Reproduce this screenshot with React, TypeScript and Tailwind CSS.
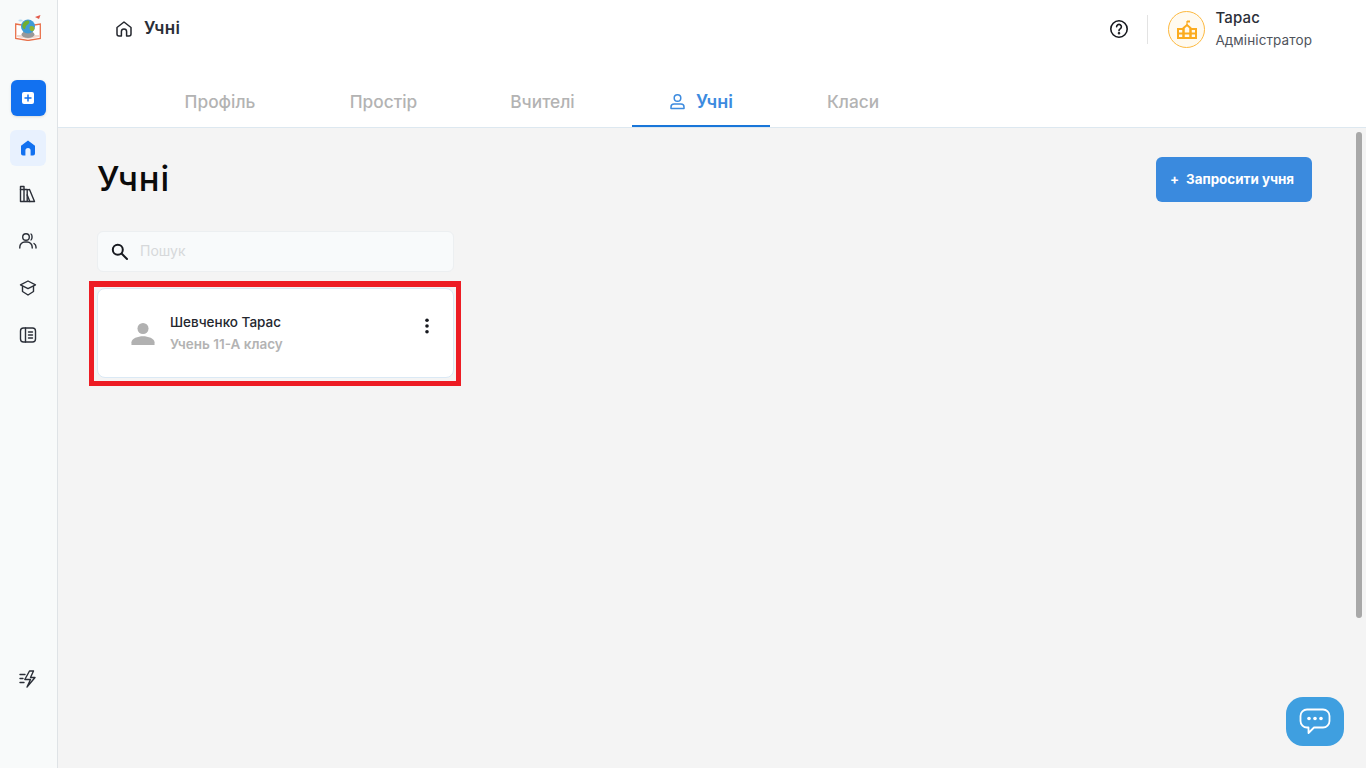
import React from "react";

const font = { fontFamily: "Inter, 'Liberation Sans', sans-serif" };

function Logo() {
  return (
    <svg width="26" height="26" viewBox="0 0 26 26">
      <path d="M0.700 9 L13 11 L25.300 9 L25.300 23.500 L13 25.500 L0.700 23.500 Z" fill="#fff" stroke="#e8704a" strokeWidth="1.300" />
      <path d="M2 22 L13 24 L24 22 L24 20 L2 20 Z" fill="#f1d9cf" />
      <ellipse cx="13" cy="19.500" rx="6.500" ry="3.500" fill="#999" />
      <circle cx="13" cy="11.500" r="7" fill="#3f9bd6" />
      <path d="M8 8.500c2-3 5-3.500 6-2.500s0 3-2 4-1 5-3 4-2-3.500-1-5.500z" fill="#6fae2f" />
      <path d="M15 11.500c2-1 4.500 0 4.500 2s-2 3.500-3.500 2.500-2-3.500-1-4.500z" fill="#8fb52f" />
      <path d="M20 2 L25.500 0 L24 4 Z" fill="#e25a4a" />
      <ellipse cx="5.500" cy="5.500" rx="2.200" ry="1" fill="#bcdcf2" />
    </svg>
  );
}

function NavIcon({ children }: { children: React.ReactNode }) {
  return (
    <svg width="20" height="20" viewBox="0 0 20 20" fill="none" stroke="#2b2f38" strokeWidth="1.400" strokeLinecap="round" strokeLinejoin="round">
      {children}
    </svg>
  );
}

function Sidebar() {
  return (
    <aside className="w-[58px] h-full shrink-0 flex flex-col items-center pr-[1px] bg-[#f8fafa] border-r border-[#dfe3e6]">
      <div className="mt-[14px] h-[28px] flex items-center justify-center">
        <Logo />
      </div>
      <div className="mt-[38px] w-[35px] h-[36px] rounded-[6px] bg-[#1271f0] flex items-center justify-center shadow-sm">
        <div className="w-[12px] h-[12px] rounded-[2px] bg-white flex items-center justify-center">
          <svg width="8" height="8" viewBox="0 0 8 8"><path d="M4 0.500V7.500M0.500 4H7.500" stroke="#1271f0" strokeWidth="1.500" /></svg>
        </div>
      </div>
      <div className="mt-[14px] w-[36px] h-[36px] rounded-[6px] bg-[#e8f1fe] flex items-center justify-center">
        <svg width="18" height="18" viewBox="0 0 18 18">
          <path d="M9 1.500 L16 6.800 V14.500 A2 2 0 0 1 14 16.500 H11.600 V11.500 A2.600 2.600 0 0 0 6.400 11.500 V16.500 H4 A2 2 0 0 1 2 14.500 V6.800 Z" fill="#1271f0" />
        </svg>
      </div>
      <div className="mt-[18px] flex flex-col items-center gap-[27px]">
        <NavIcon>
          <path d="M2.500 2.500h3.500v15H2.500zM6 5.500h3.200v12H6zM9.200 6l2.300-.6 5 12.100H9.200" />
          <path d="M2.500 5.500H6M11.800 17.500l-2.600-6.500" />
        </NavIcon>
        <NavIcon>
          <circle cx="8" cy="6" r="3.300" />
          <path d="M1.800 17v-1a5 5 0 0 1 5-5h2.400a5 5 0 0 1 5 5v1" />
          <path d="M13 3c1.400.8 1.400 5.200 0 6M16 12.500c1.200.8 2 2 2 3.500v1" />
        </NavIcon>
        <NavIcon>
          <path d="M10 3 L17.500 6.800 L10 10.600 L2.500 6.800 Z" />
          <path d="M4.500 8.500V13.500 L10 17 L15.500 13.500 V8.500" />
        </NavIcon>
        <NavIcon>
          <rect x="2.500" y="3" width="15" height="14" rx="3" />
          <path d="M7.500 3v14M10.500 7h4M10.500 10h4M10.500 13h4" />
        </NavIcon>
      </div>
      <div className="mt-auto mb-[79px]">
        <NavIcon>
          <path d="M11.500 2 L6.800 10.500 H12.500 L9 18 L17 8.500 H12.500 L15.500 2 Z" />
          <path d="M2 5.500h5M2 9.500h3M2 13.500h4" />
        </NavIcon>
      </div>
    </aside>
  );
}

function Tab({ label, cls, active }: { label: string; cls: string; active?: boolean }) {
  return (
    <div className={`${cls} h-[47px] pb-[2px] flex items-center justify-center gap-[10px] border-b-2 ${active ? "text-[18px] border-[#1976d9] text-[#3d8bdf] font-semibold" : "text-[17.300px] border-transparent text-[#b3b3b3] font-medium"}`}>
      {active && (
        <svg width="17" height="17" viewBox="0 0 17 17" fill="none" stroke="#3d8bdf" strokeWidth="1.500">
          <circle cx="8.500" cy="5" r="3.300" />
          <path d="M2 15.500v-1.500a3 3 0 0 1 3-3h7a3 3 0 0 1 3 3v1.500z" strokeLinejoin="round" />
        </svg>
      )}
      {label}
    </div>
  );
}

function Header() {
  return (
    <header className="h-[128px] shrink-0 bg-white border-b border-[#dde8f0] flex flex-col">
      <div className="h-[80px] flex pl-[57px] pr-[54px]">
        <div className="h-[57px] flex items-center gap-[11px]">
          <svg width="18" height="18" viewBox="0 0 18 18" fill="none" stroke="#24272e" strokeWidth="1.500" strokeLinejoin="round">
            <path d="M9 2 L16 7.500 V14 A2 2 0 0 1 14 16 H11.600 V11.500 A2.600 2.600 0 0 0 6.400 11.500 V16 H4 A2 2 0 0 1 2 14 V7.500 Z" />
          </svg>
          <span className="text-[17px] font-semibold text-[#2b2f38] tracking-[0.4px]">Учні</span>
        </div>
        <div className="ml-auto h-[58px] flex items-center">
          <svg width="20" height="20" viewBox="0 0 20 20" fill="none" stroke="#17191f" strokeWidth="1.600" strokeLinecap="round">
            <circle cx="10" cy="10" r="8.200" />
            <path d="M7.600 7.800a2.400 2.400 0 1 1 3.600 2.100c-.8.500-1.200.9-1.200 1.800" />
            <circle cx="10" cy="14.300" r="0.500" fill="#17191f" />
          </svg>
          <div className="w-px h-[29px] bg-[#e3e3e3] ml-[18px] mr-[20px]" />
          <div className="w-[37px] h-[37px] rounded-full border border-[#fdb940] bg-[#fffaf0] flex items-center justify-center mr-[10px]">
            <svg width="20" height="19" viewBox="0 0 20 19" fill="none" stroke="#fbab1f" strokeWidth="2">
              <path d="M10 5V1" strokeWidth="1.200" />
              <path d="M10 0.500h3v2h-3z" fill="#fbab1f" stroke="none" />
              <path d="M6.500 8 L10 5 L13.500 8 V18 H6.500 Z" />
              <path d="M1 9h5.500v9H1zM13.500 9H19v9h-5.500zM1 13.500h18" />
            </svg>
          </div>
          <div className="flex flex-col">
            <span className="text-[15px] leading-[20px] font-medium text-[#2b2f38] tracking-[0.2px]">Тарас</span>
            <span className="text-[13.500px] leading-[20px] mt-[2px] text-[#50545c] tracking-[0.1px]">Адміністратор</span>
          </div>
        </div>
      </div>
      <div className="flex pl-[73px]">
        <Tab label="Профіль" cls="w-[178px]" />
        <Tab label="Простір" cls="w-[149px]" />
        <Tab label="Вчителі" cls="w-[169px] mr-[5px]" />
        <Tab label="Учні" cls="w-[138px]" active />
        <Tab label="Класи" cls="w-[166px]" />
      </div>
    </header>
  );
}

function Card() {
  return (
    <div className="relative mt-[16px] w-[357px]">
      <div className="h-[90px] bg-white rounded-[8px] border border-[#dbe9f5] flex pl-[33px] pr-[24px]">
        <svg className="mt-[33px]" width="24" height="24" viewBox="0 0 26 26" fill="#b1b1b1">
          <circle cx="13" cy="7" r="6" />
          <path d="M0.500 25v-3c0-4 7-6.500 12.500-6.500s12.500 2.500 12.500 6.500v3z" />
        </svg>
        <div className="ml-[15px] mt-[23px] flex flex-col">
          <span className="text-[13.500px] leading-[20px] font-medium text-[#24272e]">Шевченко Тарас</span>
          <span className="mt-[2px] text-[13.500px] leading-[20px] font-semibold text-[#b3b3b3]">Учень 11-А класу</span>
        </div>
        <svg className="ml-auto mt-[29px]" width="4" height="16" viewBox="0 0 4 16" fill="#17191f">
          <circle cx="2" cy="2.300" r="1.800" />
          <circle cx="2" cy="8" r="1.800" />
          <circle cx="2" cy="13.700" r="1.800" />
        </svg>
      </div>
      <div className="absolute left-[-8px] top-[-7px] w-[372px] h-[105px] border-[5px] border-t-[6px] border-[#ed1c24]" />
    </div>
  );
}

export default function App() {
  return (
    <div className="relative w-[1366px] h-[768px] overflow-hidden flex bg-[#f4f4f4]" style={font}>
      <Sidebar />
      <div className="flex-1 h-full flex flex-col min-w-0">
        <Header />
        <main className="relative flex-1 pl-[39px] pr-[54px]">
          <div className="flex items-start justify-between pt-[29px]">
            <h1 className="text-[34.500px] leading-[44px] font-medium text-[#0b0b0b] tracking-[1px]">Учні</h1>
            <button className="w-[156px] h-[45px] pr-[4px] pb-[1px] rounded-[6px] bg-[#3a8ade] text-white text-[13.400px] font-bold flex items-center justify-center gap-[7px]">
              <span>+</span>
              <span>Запросити учня</span>
            </button>
          </div>
          <div className="mt-[29px] w-[357px] h-[41px] pb-[1px] bg-[#f8fafb] border border-[#eceff1] rounded-[6px] flex items-center pl-[12px] gap-[11px]">
            <svg width="19" height="19" viewBox="0 0 19 19" fill="none" stroke="#17191f" strokeWidth="2" strokeLinecap="round">
              <circle cx="7.800" cy="7.800" r="5" />
              <path d="M11.800 11.800 L17 17" />
            </svg>
            <span className="text-[14px] text-[#d6d8da] -mt-[1px]">Пошук</span>
          </div>
          <Card />
          <div className="absolute right-[4px] top-[4px] w-[6px] h-[486px] rounded-full bg-[#a8a8a8]" />
        </main>
      </div>
      <div className="absolute left-[1286px] top-[697px] w-[58px] h-[49px] rounded-[17px] bg-[#3f9fe0] flex items-center justify-center">
        <svg width="32" height="28" viewBox="0 0 32 28" fill="none" stroke="#fff" strokeWidth="1.800" strokeLinejoin="round">
          <path d="M8 1.500 H24 A6.500 6.500 0 0 1 30.500 8 V13 A6.500 6.500 0 0 1 24 19.500 H15 L9.500 25 V19.500 H8 A6.500 6.500 0 0 1 1.500 13 V8 A6.500 6.500 0 0 1 8 1.500 Z" />
          <circle cx="10" cy="10.500" r="1.800" fill="#fff" stroke="none" />
          <circle cx="16" cy="10.500" r="1.800" fill="#fff" stroke="none" />
          <circle cx="22" cy="10.500" r="1.800" fill="#fff" stroke="none" />
        </svg>
      </div>
    </div>
  );
}
